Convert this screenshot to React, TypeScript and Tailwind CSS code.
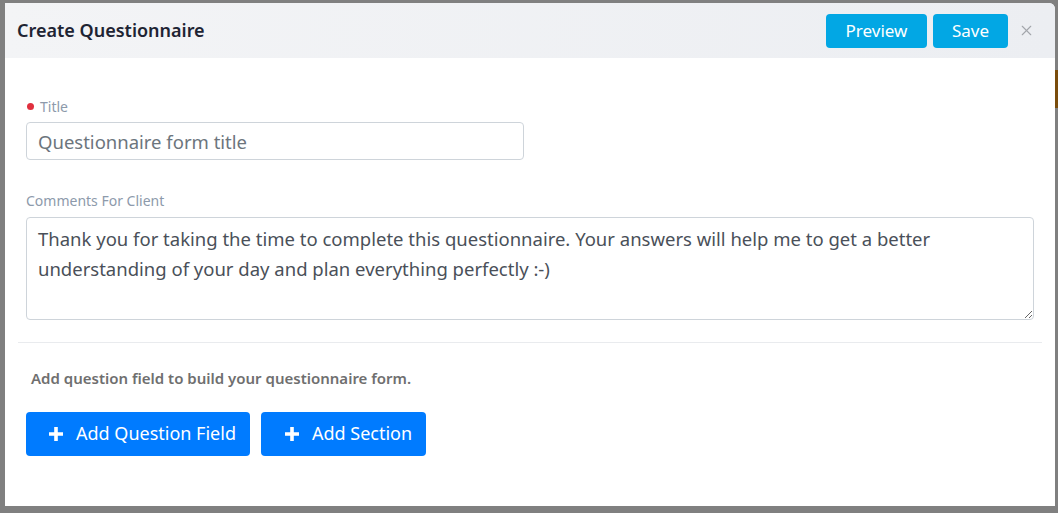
import { X } from 'lucide-react';

const font = { fontFamily: '"Noto Sans", "Open Sans", Arial, sans-serif' };

function PlusIcon() {
  return (
    <svg viewBox="0 0 14 14" className="size-[14px]" fill="currentColor">
      <path d="M5.2 0h3.6v5.2H14v3.6H8.8V14H5.2V8.8H0V5.2h5.2z" />
    </svg>
  );
}

export default function App() {
  return (
    <div className="relative h-[513px] w-[1058px] overflow-hidden bg-[#808080]" style={font}>
      {/* dimmed page edge behind the modal */}
      <div className="absolute right-0 top-[70px] h-[38px] w-[3px] bg-[#7a4d0c]" />

      <div className="absolute left-[5px] top-[3px] flex h-[503px] w-[1050px] flex-col overflow-hidden rounded-tr-[6px] bg-white">
        <header className="flex h-[55px] items-center justify-between bg-gradient-to-r from-[#f3f4f6] to-[#eceef2] pl-[12px] pr-[20px]">
          <h1 className="text-[18px] font-semibold text-[#1e2433]">Create Questionnaire</h1>
          <div className="flex items-center">
            <button className="h-[34px] w-[101px] rounded-[4px] bg-[#02a7e4] text-[17px] text-white">Preview</button>
            <button className="ml-[6px] h-[34px] w-[75px] rounded-[4px] bg-[#02a7e4] text-[17px] text-white">Save</button>
            <X className="ml-[10px] size-[17px] text-[#a3a6ab]" strokeWidth={1.6} />
          </div>
        </header>

        <div className="flex flex-col px-[13px] pt-[38px]">
          <label className="flex items-center gap-[6px] pl-[9px] text-[14px] text-[#8d9aab]">
            <span className="size-[7px] rounded-full bg-[#e0303e]" />
            Title
          </label>
          <input
            className="ml-[8px] mt-[5px] h-[38px] w-[498px] rounded-[4px] border border-[#ced4da] px-[11px] text-[18.5px] text-[#495057] placeholder:text-[#6c757d] outline-none"
            placeholder="Questionnaire form title"
          />

          <label className="ml-[8px] mt-[30px] text-[14px] text-[#8d9aab]">Comments For Client</label>
          <textarea
            className="ml-[8px] mt-[6px] h-[103px] w-[1008px] rounded-[4px] border border-[#ced4da] px-[11px] py-[6px] text-[18.5px] leading-[30px] text-[#4a5059] outline-none"
            defaultValue="Thank you for taking the time to complete this questionnaire. Your answers will help me to get a better understanding of your day and plan everything perfectly :-)"
          />

          <div className="mt-[22px] border-t border-[#e9ebee]" />

          <p className="ml-[13px] mt-[24px] text-[15px] font-semibold text-[#6f6f6f]">Add question field to build your questionnaire form.</p>

          <div className="ml-[8px] mt-[22px] flex gap-[11px]">
            <button className="flex h-[44px] items-center gap-[13px] rounded-[4px] bg-[#007bff] pl-[23px] pr-[14px] text-[18px] text-white">
              <PlusIcon />
              Add Question Field
            </button>
            <button className="flex h-[44px] items-center gap-[13px] rounded-[4px] bg-[#007bff] pl-[24px] pr-[14px] text-[18px] text-white">
              <PlusIcon />
              Add Section
            </button>
          </div>
        </div>
      </div>
    </div>
  );
}
